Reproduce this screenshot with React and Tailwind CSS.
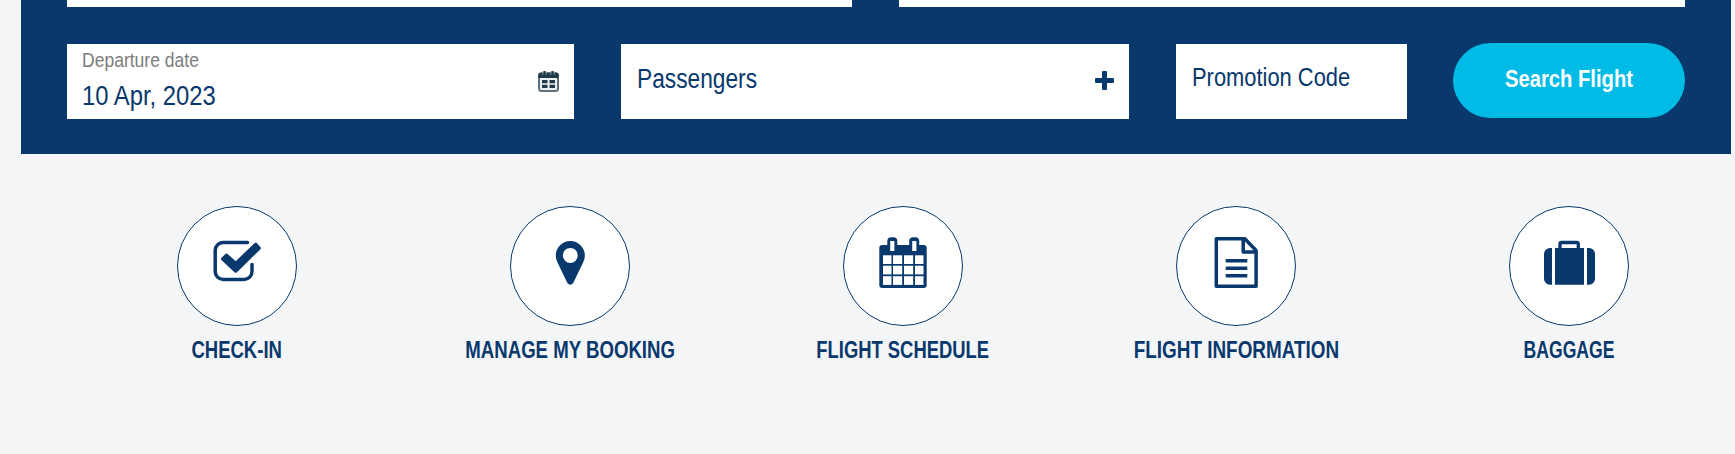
import React from 'react';

const CheckInIcon = () => (
  <svg viewBox="30 30 60 60" className="w-[60px] h-[60px]" fill="none" stroke="currentColor">
    <path d="M70.5 36.6H46a7.8 7.8 0 0 0-7.8 7.8v21.2a7.8 7.8 0 0 0 7.8 7.8h21.2a7.8 7.8 0 0 0 7.8-7.8v-7" strokeWidth="3.5" strokeLinecap="round" />
    <path d="M45.8 53l3.6-3.6 9.300 8.300 20-19.200 3.300 3.600-23.300 22.800z" fill="currentColor" strokeWidth="3.600" strokeLinejoin="round" />
  </svg>
);

const PinIcon = () => (
  <svg viewBox="30 30 60 60" className="w-[60px] h-[60px]" fill="currentColor">
    <path
      fillRule="evenodd"
      d="M60.3 35a14.5 14.5 0 0 1 14.5 14.5c0 2.800-.7 4.800-1.700 6.900L63.200 77q-2.900 3.400-5.800 0L47.500 56.400c-1-2.100-1.700-4.100-1.700-6.900A14.500 14.500 0 0 1 60.300 35zm0 6.900a7.500 7.500 0 1 0 0 15 7.500 7.500 0 1 0 0-15z"
    />
  </svg>
);

const ScheduleIcon = () => (
  <svg viewBox="30 30 60 60" className="w-[60px] h-[60px]" fill="currentColor">
    <rect x="36.3" y="39" width="47.4" height="43" rx="3" />
    <rect x="44.3" y="31.3" width="10" height="17" rx="4" />
    <rect x="66.2" y="31.3" width="10" height="17" rx="4" />
    <g fill="#fff">
      <rect x="47.2" y="35" width="4.2" height="10" rx="0.5" />
      <rect x="69.2" y="35" width="4.2" height="10" rx="0.5" />
      {[49.3, 59.7, 70.2].map((y) => (
        <g key={y}>
          <rect x="40" y={y} width="8.5" height="8.7" />
          <rect x="50" y={y} width="9.2" height="8.7" />
          <rect x="61" y={y} width="9.2" height="8.7" />
          <rect x="72" y={y} width="8.5" height="8.7" />
        </g>
      ))}
    </g>
  </svg>
);

const DocumentIcon = () => (
  <svg viewBox="30 30 60 60" className="w-[60px] h-[60px]" fill="none" stroke="currentColor" strokeWidth="3.5" strokeLinejoin="round">
    <path d="M40.3 32.8h28.5l11.300 11.700v35.700H40.300z" />
    <path d="M67.2 32.8v13.100h12.900" />
    <path d="M49.7 54.7h21.6M49.7 62.3h21.6M49.7 69.7h21.6" />
  </svg>
);

const BaggageIcon = () => (
  <svg viewBox="30 30 60 60" className="w-[60px] h-[60px]" fill="currentColor">
    <path d="M43 42v36.700h-2a6 6 0 0 1-6-6V48a6 6 0 0 1 6-6z" />
    <path d="M46 42h29v36.700H46z" />
    <path d="M78 42v36.700h2a6 6 0 0 0 6-6V48a6 6 0 0 0-6-6z" />
    <path d="M51 43v-5a1.500 1.500 0 0 1 1.500-1.500h15.300a1.500 1.500 0 0 1 1.500 1.500v5" fill="none" stroke="currentColor" strokeWidth="3.3" />
  </svg>
);

const DateIcon = () => (
  <svg viewBox="0 0 21 21" className="w-[21px] h-[21px] text-[#213a49]">
    <rect x="1" y="2.5" width="19" height="17.5" rx="2.5" fill="#eef1f2" stroke="#5f717c" strokeWidth="2" />
    <path d="M0.300 7V4a2.500 2.500 0 0 1 2.500-2.500h15.400A2.500 2.500 0 0 1 20.700 4v3z" fill="currentColor" />
    <path d="M5 0v4M8 0v4M13 0v4M16 0v4" stroke="#a9b4ba" strokeWidth="0.9" />
    <path d="M6.500 0v4.500M14.500 0v4.500" stroke="currentColor" strokeWidth="2" />
    <path d="M4 9h5.500v3.300H4zM11.500 9H17v3.300h-5.500zM4 13.700h5.500V17H4zM11.500 13.700H17V17h-5.500z" fill="currentColor" />
  </svg>
);

const PlusIcon = () => (
  <svg viewBox="0 0 19 19" className="w-[19px] h-[19px]" fill="currentColor">
    <rect x="0" y="7" width="19" height="5" rx="1" />
    <rect x="7" y="0" width="5" height="19" rx="1" />
  </svg>
);

const links = [
  { label: 'CHECK-IN', icon: CheckInIcon, scale: 'scale-x-[0.772]' },
  { label: 'MANAGE MY BOOKING', icon: PinIcon, scale: 'scale-x-[0.776]' },
  { label: 'FLIGHT SCHEDULE', icon: ScheduleIcon, scale: 'scale-x-[0.766]' },
  { label: 'FLIGHT INFORMATION', icon: DocumentIcon, scale: 'scale-x-[0.787]' },
  { label: 'BAGGAGE', icon: BaggageIcon, scale: 'scale-x-[0.732]' },
];

const App = () => {
  return (
    <div className="h-[454px] overflow-hidden bg-[#f3f5f7] text-[#09386d] font-['Liberation_Sans_Narrow','Liberation_Sans',sans-serif]">
      {/* Flight search form */}
      <div className="ml-[21px] w-[1710px] h-[154px] bg-[#09386d] px-[46px]">
        <div className="flex justify-between h-[7px]">
          <div className="w-[785px] bg-white" />
          <div className="w-[786px] bg-white" />
        </div>

        <div className="flex mt-9">
          <div className="w-[507px] h-[75px] mt-px bg-white flex items-center justify-between px-[15px]">
            <div className="h-[75px] flex flex-col items-start whitespace-nowrap">
              <span className="mt-1 text-[20.5px] leading-6 text-[#7d7d7d] origin-left scale-x-[0.855]">Departure date</span>
              <span className="mt-2 text-[27px] leading-8 origin-left scale-x-[0.882]">10 Apr, 2023</span>
            </div>
            <DateIcon />
          </div>

          <div className="w-[508px] h-[75px] mt-px ml-[47px] bg-white flex items-center justify-between pl-4 pr-[15px] pb-[2px]">
            <span className="pb-[3px] text-[27px] leading-8 origin-left scale-x-[0.842]">Passengers</span>
            <PlusIcon />
          </div>

          <div className="w-[231px] h-[75px] mt-px ml-[47px] bg-white flex items-center pl-4 pb-[9px]">
            <span className="text-[26px] leading-8 whitespace-nowrap origin-left scale-x-[0.842]">Promotion Code</span>
          </div>

          <button className="w-[232px] h-[75px] ml-[46px] rounded-full bg-[#00bbe6] text-white text-[24px] font-bold flex items-center justify-center pb-[3px]">
            <span className="whitespace-nowrap scale-x-[0.842]">Search Flight</span>
          </button>
        </div>
      </div>

      {/* Quick links */}
      <div className="grid grid-cols-[repeat(5,333px)] ml-[70.5px] mt-[52px]">
        {links.map(({ label, icon: Icon, scale }) => (
          <div key={label} className="flex flex-col items-center">
            <div className="w-[120px] h-[120px] rounded-full bg-white border border-[#09386d] flex items-center justify-center">
              <Icon />
            </div>
            <span className={`mt-2 text-[24px] leading-8 font-bold whitespace-nowrap ${scale}`}>{label}</span>
          </div>
        ))}
      </div>
    </div>
  );
};

export default App;
